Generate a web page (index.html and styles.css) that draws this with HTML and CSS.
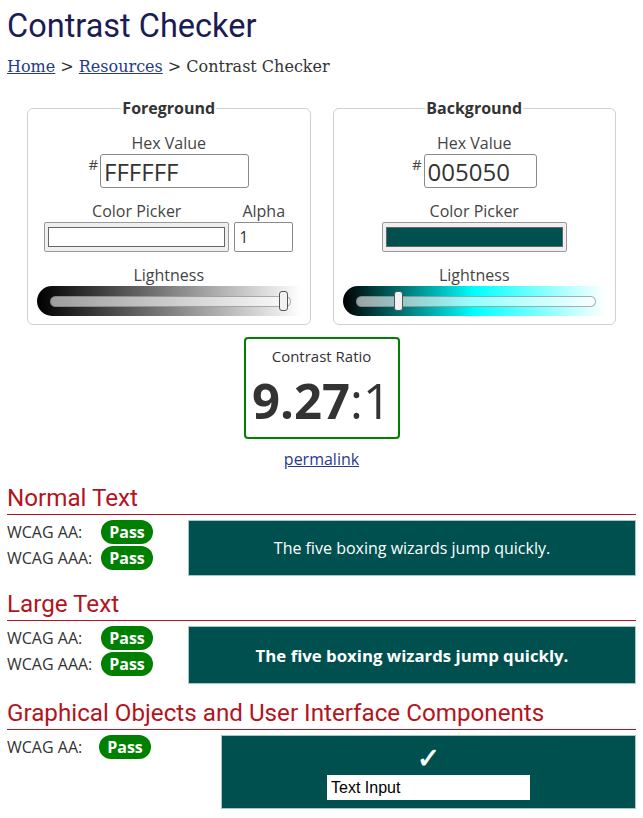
FILE: index.html
```html
<!DOCTYPE html>
<html lang="en">
<head>
<meta charset="utf-8">
<title>Contrast Checker</title>
<link rel="stylesheet" href="styles.css">
</head>
<body>
<main class="page">
  <h1 class="title">Contrast Checker</h1>
  <nav class="crumbs"><a href="#">Home</a> &gt; <a href="#">Resources</a> &gt; Contrast Checker</nav>

  <div class="pickers">
    <fieldset class="panel">
      <legend class="panel-legend">Foreground</legend>
      <div class="label">Hex Value</div>
      <div class="hexrow"><span class="hash">#</span><input class="hex hex-fg" value="FFFFFF"></div>
      <div class="pickrow">
        <div class="col">
          <div class="label">Color Picker</div>
          <div class="swatch"><span class="swatch-fill fill-fg"></span></div>
        </div>
        <div class="col">
          <div class="label">Alpha</div>
          <input class="alpha" value="1">
        </div>
      </div>
      <div class="label label-light">Lightness</div>
      <div class="slider slider-fg">
        <div class="track"><span class="thumb" style="left:99.5%"></span></div>
      </div>
    </fieldset>

    <fieldset class="panel">
      <legend class="panel-legend">Background</legend>
      <div class="label">Hex Value</div>
      <div class="hexrow"><span class="hash">#</span><input class="hex hex-bg" value="005050"></div>
      <div class="pickrow">
        <div class="col">
          <div class="label">Color Picker</div>
          <div class="swatch"><span class="swatch-fill fill-bg"></span></div>
        </div>
      </div>
      <div class="label label-light">Lightness</div>
      <div class="slider slider-bg">
        <div class="track"><span class="thumb" style="left:19.3%"></span></div>
      </div>
    </fieldset>
  </div>

  <div class="ratio">
    <div class="ratio-label">Contrast Ratio</div>
    <div class="ratio-value"><strong>9.27</strong>:1</div>
  </div>
  <div class="permalink"><a href="#">permalink</a></div>

  <section class="result">
    <h2 class="result-title">Normal Text</h2>
    <div class="result-body">
      <div class="checks checks-text">
        <div class="check"><span class="check-label">WCAG AA:</span><span class="badge">Pass</span></div>
        <div class="check"><span class="check-label">WCAG AAA:</span><span class="badge">Pass</span></div>
      </div>
      <div class="preview preview-normal">The five boxing wizards jump quickly.</div>
    </div>
  </section>

  <section class="result">
    <h2 class="result-title">Large Text</h2>
    <div class="result-body">
      <div class="checks checks-text">
        <div class="check"><span class="check-label">WCAG AA:</span><span class="badge">Pass</span></div>
        <div class="check"><span class="check-label">WCAG AAA:</span><span class="badge">Pass</span></div>
      </div>
      <div class="preview preview-large">The five boxing wizards jump quickly.</div>
    </div>
  </section>

  <section class="result result-ui">
    <h2 class="result-title">Graphical Objects and User Interface Components</h2>
    <div class="result-body">
      <div class="checks checks-ui">
        <div class="check"><span class="check-label check-label-ui">WCAG AA:</span><span class="badge">Pass</span></div>
      </div>
      <div class="preview preview-ui">
        <span class="tick">&#10003;</span>
        <input class="sample-input" value="Text Input">
      </div>
    </div>
  </section>
</main>
</body>
</html>
```
FILE: styles.css
```css
html, body {
  margin: 0;
  padding: 0;
  background: #fff;
}

body {
  font-family: "Open Sans", "Liberation Sans", sans-serif;
  color: #333;
}

.page {
  padding: 0 7px;
}

.title {
  margin: 0;
  padding-top: 6px;
  font-family: Roboto, "Liberation Sans", sans-serif;
  font-weight: 400;
  font-size: 32.5px;
  line-height: 40px;
  color: #1c1c55;
}

.crumbs {
  margin-top: 11px;
  font-family: "DejaVu Serif", "Liberation Serif", serif;
  font-size: 16px;
  line-height: 20px;
  color: #333;
}

.crumbs a {
  color: #263a8a;
}

.pickers {
  display: flex;
  gap: 22px;
  padding: 0 20px;
  margin-top: 20px;
}

.panel {
  flex: 1;
  min-width: 0;
  margin: 0;
  padding: 13px 9px 8px;
  border: 1px solid #d0d0d0;
  border-radius: 6px;
}

.panel-legend {
  margin: 0 auto;
  padding: 0 1px;
  font-weight: 700;
  font-size: 16px;
  line-height: 22px;
  color: #333;
}

.label {
  text-align: center;
  font-size: 16px;
  line-height: 22px;
  color: #444;
}

.hexrow {
  display: flex;
  justify-content: center;
  align-items: flex-start;
  gap: 2px;
}

.hash {
  font-size: 15px;
  line-height: 20px;
  color: #444;
}

.hex {
  box-sizing: border-box;
  height: 34px;
  margin: 0;
  padding: 0 3px;
  border: 1px solid #8a8a8a;
  border-radius: 3px;
  font-family: "Open Sans", sans-serif;
  font-size: 24px;
  color: #333;
  background: #fff;
}

.hex-fg {
  width: 149px;
}

.hex-bg {
  width: 113px;
}

.pickrow {
  display: flex;
  justify-content: center;
  align-items: flex-end;
  gap: 5px;
  margin-top: 12px;
}

.col {
  display: flex;
  flex-direction: column;
  align-items: center;
}

.swatch {
  box-sizing: border-box;
  display: flex;
  width: 185px;
  height: 30px;
  padding: 4px 3px;
  border: 1px solid #9a9a9a;
  border-radius: 2px;
  background: #efefef;
}

.swatch-fill {
  flex: 1;
  border: 1px solid #666;
}

.fill-fg {
  background: #fff;
}

.fill-bg {
  background: #005050;
}

.alpha {
  box-sizing: border-box;
  width: 59px;
  height: 30px;
  margin: 0;
  padding: 0 4px;
  border: 1px solid #8a8a8a;
  border-radius: 2px;
  font-family: "Open Sans", sans-serif;
  font-size: 16px;
  color: #333;
}

.label-light {
  margin-top: 12px;
}

.slider {
  display: flex;
  align-items: center;
  height: 30px;
  padding: 0 10px 0 13px;
  border-radius: 15px 0 0 15px;
}

.slider-fg {
  background: linear-gradient(to right, #000 0%, #fff 100%);
}

.slider-bg {
  background: linear-gradient(to right, #000 0%, #00ffff 50%, #fff 100%);
}

.track {
  position: relative;
  flex: 1;
  box-sizing: border-box;
  height: 11px;
  border: 1px solid rgba(110, 110, 110, 0.55);
  border-radius: 6px;
  background: rgba(255, 255, 255, 0.6);
}

.thumb {
  position: absolute;
  top: -6px;
  width: 9px;
  height: 20px;
  box-sizing: border-box;
  margin-left: -9px;
  border: 1px solid #555;
  border-radius: 3px;
  background: #f2f2f2;
}

.ratio {
  box-sizing: border-box;
  width: 156px;
  margin: 12px auto 0;
  padding: 6px 0 8px;
  border: 2px solid #008000;
  border-radius: 4px;
  text-align: center;
}

.ratio-label {
  font-size: 15px;
  line-height: 22px;
  color: #333;
}

.ratio-value {
  margin-top: 4px;
  font-size: 49px;
  line-height: 58px;
  color: #333;
}

.ratio-value strong {
  font-weight: 700;
}

.permalink {
  margin-top: 9px;
  text-align: center;
  font-size: 16px;
  line-height: 22px;
}

.permalink a {
  color: #2a3a8c;
}

.result {
  margin-top: 14px;
}

.result-ui {
  margin-top: 15px;
}

.result-title {
  margin: 0;
  padding-bottom: 2px;
  border-bottom: 1px solid #b3141e;
  font-family: Roboto, "Liberation Sans", sans-serif;
  font-weight: 400;
  font-size: 24.2px;
  line-height: 28px;
  color: #b3141e;
}

.result-body {
  display: flex;
  margin-top: 5px;
}

.checks {
  display: flex;
  flex-direction: column;
  gap: 2px;
}

.checks-text {
  width: 181px;
}

.checks-ui {
  width: 214px;
}

.check {
  display: flex;
  align-items: center;
  height: 24px;
}

.check-label {
  width: 94px;
  font-size: 16px;
  color: #333;
}

.check-label-ui {
  width: 92px;
}

.badge {
  box-sizing: border-box;
  width: 52px;
  height: 24px;
  border-radius: 12px;
  background: #008000;
  color: #fff;
  font-weight: 700;
  font-size: 16px;
  line-height: 24px;
  text-align: center;
}

.preview {
  flex: 1;
  box-sizing: border-box;
  display: flex;
  align-items: center;
  justify-content: center;
  border: 1px solid #a8c8c8;
  background: #005050;
  color: #fff;
}

.preview-normal {
  height: 56px;
  font-size: 16px;
}

.preview-large {
  height: 58px;
  font-size: 16.8px;
  font-weight: 700;
}

.preview-ui {
  flex-direction: column;
  justify-content: flex-start;
  height: 74px;
  padding: 10px 0 8px;
}

.tick {
  font-family: "DejaVu Sans", sans-serif;
  font-size: 28px;
  line-height: 26px;
  font-weight: 700;
  -webkit-text-stroke: 0.8px #fff;
}

.sample-input {
  box-sizing: border-box;
  width: 203px;
  height: 25px;
  margin: 3px 0 0;
  padding: 0 4px;
  border: 0;
  background: #fff;
  font-family: "Liberation Sans", Arial, sans-serif;
  font-size: 16px;
  color: #000;
}
```
